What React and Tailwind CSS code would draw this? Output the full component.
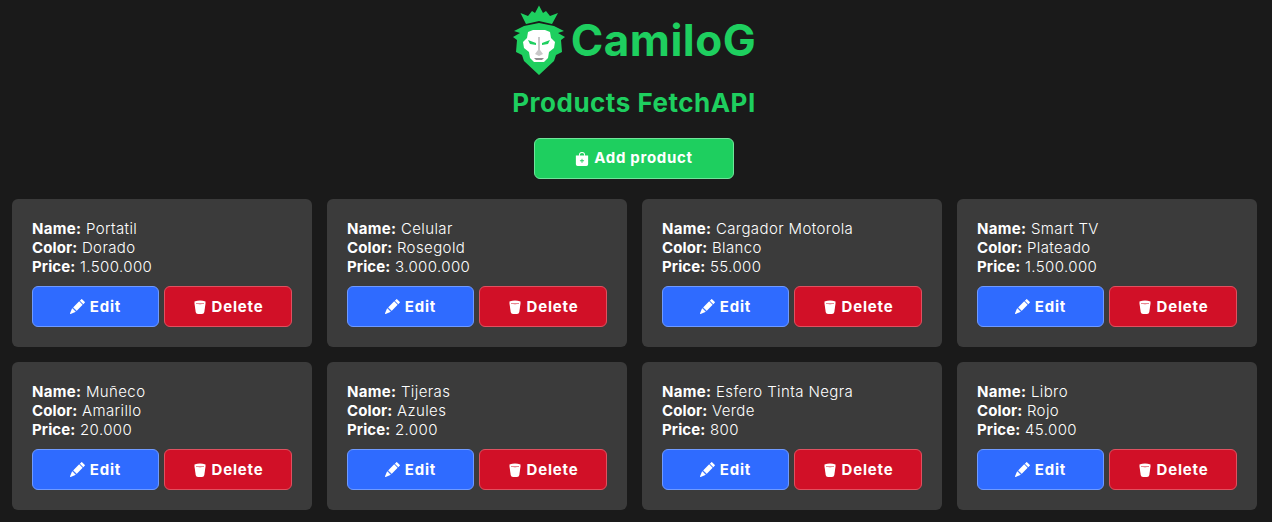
import React from "react";
import { BsBagPlusFill, BsPencilFill } from "react-icons/bs";

const products = [
  ["Portatil", "Dorado", "1.500.000"],
  ["Celular", "Rosegold", "3.000.000"],
  ["Cargador Motorola", "Blanco", "55.000"],
  ["Smart TV", "Plateado", "1.500.000"],
  ["Muñeco", "Amarillo", "20.000"],
  ["Tijeras", "Azules", "2.000"],
  ["Esfero Tinta Negra", "Verde", "800"],
  ["Libro", "Rojo", "45.000"],
];

function Logo() {
  return (
    <svg width="56" height="72" viewBox="0 0 56 72" className="shrink-0">
      <path fill="#1ecf5f" d="M8.5 9 L16 12 L20 7 L23 9 L27 1.5 L31 9 L34 7 L38 12 L46 9 L40 20 L27 17 L14 20 Z" />
      <path fill="#1ecf5f" d="M12 22 L27 19 L42 22 L52 27 L46 29 L53 33 L49 36 L50 48 L44 51 L42 57 L27 71 L12 57 L10 51 L4 48 L5 36 L1 33 L8 29 L2 27 Z" />
      <path fill="#ffffff" d="M16 28 L21 26 L33 26 L38 28 L39 34 L43 38 L42 44 L37 48 L36 54 L32 58 L22 58 L18 54 L17 48 L12 44 L11 38 L15 34 Z" />
      <path fill="#1ecf5f" d="M16 36 L24 39 L24 41 L18 40 Z M38 36 L30 39 L30 41 L36 40 Z" />
      <path fill="#c8c8c8" d="M26 33 L28 33 L28 46 L31 50 L27 52 L23 50 L26 46 Z" />
      <path fill="#8f8f8f" d="M22 54 L32 54 L30 56 L24 56 Z" />
    </svg>
  );
}

function TrashCup() {
  return (
    <svg width="14" height="14" viewBox="0 0 14 14" className="shrink-0">
      <path fill="#fff" d="M1.5 1.5 Q7 -0.5 12.5 1.5 L12.5 3.5 L11.3 12 Q11 14 9 14 L5 14 Q3 14 2.7 12 L1.5 3.5 Z" />
      <path fill="#d11027" d="M3 3 Q7 4.2 11 3 L11 3.6 Q7 4.8 3 3.6 Z" />
    </svg>
  );
}

function Card({ name, color, price }) {
  return (
    <div className="h-[148px] rounded-[6px] bg-[#3b3b3b] p-5 text-[15px] leading-[19px] font-light tracking-[0.4px] text-white">
      <p><b className="font-bold tracking-[0.3px] text-white">Name:</b> {name}</p>
      <p><b className="font-bold tracking-[0.1px] text-white">Color:</b> {color}</p>
      <p><b className="font-bold tracking-[0.1px] text-white">Price:</b> {price}</p>
      <div className="mt-[10px] flex gap-[5px]">
        <button className="flex h-[41px] w-[127px] items-center justify-center gap-[5px] rounded-[6px] border border-[#6f9aff] bg-[#2f6bff] text-[15px] font-bold tracking-[0.8px] text-white">
          <BsPencilFill size={15} /> Edit
        </button>
        <button className="flex h-[41px] w-[128px] items-center justify-center gap-[5px] rounded-[6px] border border-[#e0505f] bg-[#d11027] text-[15px] font-bold tracking-[0.8px] text-white">
          <TrashCup /> Delete
        </button>
      </div>
    </div>
  );
}

export default function App() {
  return (
    <div className="min-h-[522px] w-full bg-[#1a1a1a] font-['Inter','Liberation_Sans',sans-serif]">
      <div className="flex w-[1268px] flex-col items-center">
        <div className="flex h-[80px] items-center gap-[3px]">
          <Logo />
          <span className="text-[44px] leading-none font-bold tracking-[0.5px] text-[#1ecf5f]">CamiloG</span>
        </div>
        <h2 className="mt-[7px] text-[26px] leading-[32px] font-bold tracking-[0.5px] text-[#1ecf5f]">Products FetchAPI</h2>
        <button className="mt-[19px] flex h-[41px] w-[200px] items-center justify-center gap-[5px] rounded-[6px] border border-[#6fe59a] bg-[#1ecf5f] text-[15px] font-bold tracking-[0.7px] text-white">
          <BsBagPlusFill size={14} /> Add product
        </button>
      </div>
      <div className="mt-[20px] grid grid-cols-[repeat(4,300px)] gap-[15px] pl-[12px]">
        {products.map(([name, color, price]) => (
          <Card key={name} name={name} color={color} price={price} />
        ))}
      </div>
    </div>
  );
}
